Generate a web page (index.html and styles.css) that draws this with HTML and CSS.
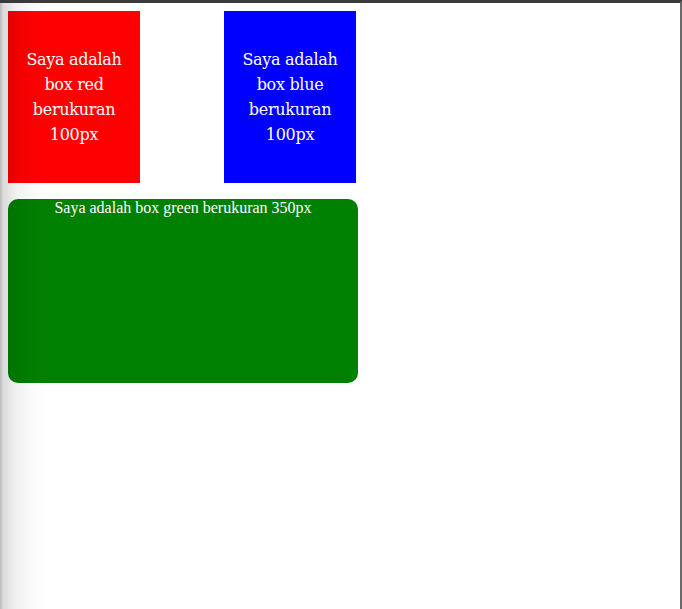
FILE: index.html
```html
<!DOCTYPE html>
<html lang="id">
<head>
<meta charset="utf-8">
<title>Box</title>
<link rel="stylesheet" href="styles.css">
</head>
<body>
  <div class="row">
    <div class="box box-red">Saya adalah box red berukuran 100px</div>
    <div class="box box-blue">Saya adalah box blue berukuran 100px</div>
  </div>
  <div class="box-green">Saya adalah box green berukuran 350px</div>
  <div class="edge-shadow"></div>
</body>
</html>
```
FILE: styles.css
```css
html {
  border-top: 3px solid #3a3a3a;
  border-right: 2px solid #6a6a6a;
  min-height: 100%;
  box-sizing: border-box;
  background: #fff;
}
body {
  margin: 8px;
  font-family: "Liberation Serif", serif;
}
.row {
  display: flex;
  gap: 84px;
}
.box {
  width: 132px;
  height: 172px;
  box-sizing: border-box;
  padding: 0 14px;
  display: flex;
  align-items: center;
  justify-content: center;
  text-align: center;
  color: #fff;
  font-family: "DejaVu Serif", serif;
  font-size: 16px;
  line-height: 25px;
  letter-spacing: -0.3px;
}
.box-red { background: #ff0000; }
.box-blue { background: #0000ff; }
.box-green {
  margin-top: 16px;
  width: 350px;
  height: 184px;
  background: #008000;
  border-radius: 10px;
  color: #fff;
  text-align: center;
  font-size: 16px;
  line-height: 18px;
}
.edge-shadow {
  position: fixed;
  top: 3px;
  left: 0;
  bottom: 0;
  width: 48px;
  pointer-events: none;
  background: linear-gradient(to right, rgba(0,0,0,0.28) 0, rgba(0,0,0,0.14) 3px, rgba(0,0,0,0.06) 16px, rgba(0,0,0,0.02) 32px, rgba(0,0,0,0) 48px);
}
```
